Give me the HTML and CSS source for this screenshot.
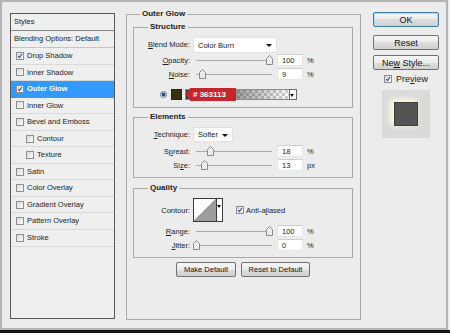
FILE: index.html
```html
<!DOCTYPE html>
<html lang="en">
<head>
    <meta charset="UTF-8">
    <meta name="viewport" content="width=device-width, initial-scale=1.0">
    <title>Layer Style - Outer Glow</title>
    <link rel="stylesheet" href="styles.css">
</head>
<body>

<div class="dialog">

    <div class="styles-list">
        <div class="list-head">Styles</div>
        <div class="list-item plain">Blending Options: Default</div>
        <div class="list-item"><span class="cb on"><svg viewBox="0 0 8 8"><path d="M1.6 4.2 L3.3 6.2 L6.6 1.4"/></svg></span>Drop Shadow</div>
        <div class="list-item"><span class="cb"></span>Inner Shadow</div>
        <div class="list-item selected"><span class="cb on"><svg viewBox="0 0 8 8"><path d="M1.6 4.2 L3.3 6.2 L6.6 1.4"/></svg></span>Outer Glow</div>
        <div class="list-item"><span class="cb"></span>Inner Glow</div>
        <div class="list-item"><span class="cb"></span>Bevel and Emboss</div>
        <div class="list-item nested"><span class="cb"></span>Contour</div>
        <div class="list-item nested"><span class="cb"></span>Texture</div>
        <div class="list-item"><span class="cb"></span>Satin</div>
        <div class="list-item"><span class="cb"></span>Color Overlay</div>
        <div class="list-item"><span class="cb"></span>Gradient Overlay</div>
        <div class="list-item"><span class="cb"></span>Pattern Overlay</div>
        <div class="list-item"><span class="cb"></span>Stroke</div>
    </div>

    <fieldset class="group main">
        <legend>Outer Glow</legend>

        <fieldset class="group subgroup structure">
            <legend>Structure</legend>
            <div class="row tall">
                <label class="lbl"><u>B</u>lend Mode:</label>
                <div class="select blend">Color Burn<span class="caret"></span></div>
            </div>
            <div class="row">
                <label class="lbl"><u>O</u>pacity:</label>
                <div class="slider"><span class="thumb" style="left:72.5px"><svg viewBox="0 0 7 10"><path d="M0.5 3.5 L3.5 0.5 L6.5 3.5 V9.5 H0.5 Z"/></svg></span></div>
                <div class="num">100</div><span class="unit">%</span>
            </div>
            <div class="row">
                <label class="lbl"><u>N</u>oise:</label>
                <div class="slider"><span class="thumb" style="left:5.5px"><svg viewBox="0 0 7 10"><path d="M0.5 3.5 L3.5 0.5 L6.5 3.5 V9.5 H0.5 Z"/></svg></span></div>
                <div class="num">9</div><span class="unit">%</span>
            </div>
            <div class="row color-row">
                <span class="radio"></span>
                <span class="swatch"></span>
                <div class="gradient"><span class="tag"># 363113</span></div>
                <span class="drop"><span class="caret small"></span></span>
            </div>
        </fieldset>

        <fieldset class="group subgroup elements">
            <legend>Elements</legend>
            <div class="row tech">
                <label class="lbl"><u>T</u>echnique:</label>
                <div class="select technique">Softer<span class="caret"></span></div>
            </div>
            <div class="row">
                <label class="lbl">S<u>p</u>read:</label>
                <div class="slider"><span class="thumb" style="left:13.5px"><svg viewBox="0 0 7 10"><path d="M0.5 3.5 L3.5 0.5 L6.5 3.5 V9.5 H0.5 Z"/></svg></span></div>
                <div class="num">18</div><span class="unit">%</span>
            </div>
            <div class="row">
                <label class="lbl">Si<u>z</u>e:</label>
                <div class="slider"><span class="thumb" style="left:7.5px"><svg viewBox="0 0 7 10"><path d="M0.5 3.5 L3.5 0.5 L6.5 3.5 V9.5 H0.5 Z"/></svg></span></div>
                <div class="num">13</div><span class="unit">px</span>
            </div>
        </fieldset>

        <fieldset class="group subgroup quality">
            <legend>Quality</legend>
            <div class="row contour-row">
                <label class="lbl">Contour:</label>
                <div class="contour"><span class="curve"></span><span class="drop"><span class="caret small"></span></span></div>
                <label class="check"><span class="cb on"><svg viewBox="0 0 8 8"><path d="M1.6 4.2 L3.3 6.2 L6.6 1.4"/></svg></span>Anti-a<u>l</u>iased</label>
            </div>
            <div class="row range">
                <label class="lbl"><u>R</u>ange:</label>
                <div class="slider"><span class="thumb" style="left:72.5px"><svg viewBox="0 0 7 10"><path d="M0.5 3.5 L3.5 0.5 L6.5 3.5 V9.5 H0.5 Z"/></svg></span></div>
                <div class="num">100</div><span class="unit">%</span>
            </div>
            <div class="row">
                <label class="lbl"><u>J</u>itter:</label>
                <div class="slider"><span class="thumb" style="left:0px"><svg viewBox="0 0 7 10"><path d="M0.5 3.5 L3.5 0.5 L6.5 3.5 V9.5 H0.5 Z"/></svg></span></div>
                <div class="num">0</div><span class="unit">%</span>
            </div>
        </fieldset>

        <div class="defaults">
            <button class="btn small">Make Default</button>
            <button class="btn small">Reset to Default</button>
        </div>
    </fieldset>

    <div class="side">
        <button class="btn default">OK</button>
        <button class="btn reset">Reset</button>
        <button class="btn newstyle">Ne<u>w</u> Style...</button>
        <label class="preview-check"><span class="cb on"><svg viewBox="0 0 8 8"><path d="M1.6 4.2 L3.3 6.2 L6.6 1.4"/></svg></span>Pre<u>v</u>iew</label>
        <div class="preview-box"><div class="preview-square"></div></div>
    </div>

</div>

</body>
</html>
```

FILE: styles.css
```css
body {
    margin: 0;
    width: 450px;
    height: 333px;
    font-family: "Liberation Sans", Arial, sans-serif;
    font-size: 7.5px;
    color: #222;
    background: linear-gradient(to bottom, #ececec 330px, #151515 330px);
}

.dialog {
    width: 448px;
    height: 330px;
    box-sizing: border-box;
    border: 2px solid #b4b4b4;
    background-color: #ececec;
    display: flex;
    align-items: flex-start;
}

/* styles list on the left */

.styles-list {
    width: 105px;
    height: 306px;
    box-sizing: border-box;
    margin: 11px 0 0 8px;
    border: 1px solid #585858;
    background-color: #efefef;
}

.list-head {
    height: 16px;
    line-height: 16px;
    padding-left: 3px;
    border-bottom: 1px solid #8a8a8a;
}

.list-item {
    height: 15.55px;
    line-height: 15.55px;
    border-bottom: 1px solid #d9d9d9;
    display: flex;
    align-items: center;
    padding-left: 5px;
    white-space: nowrap;
}

.list-item.plain {
    padding-left: 3px;
    height: 16px;
    border-bottom-color: #c4c4c4;
}

.list-item.nested {
    padding-left: 15px;
}

.list-item.selected {
    background-color: #3399ff;
    color: #fff;
    font-weight: bold;
    border-bottom-color: #3399ff;
}

.cb {
    width: 8px;
    height: 8px;
    box-sizing: border-box;
    border: 1px solid #8e8e8e;
    background: linear-gradient(135deg, #d8d8d8, #fdfdfd);
    margin-right: 3px;
    flex-shrink: 0;
    display: inline-flex;
}

.cb svg {
    width: 6px;
    height: 6px;
}

.cb path {
    fill: none;
    stroke: #2a4a9c;
    stroke-width: 1.4;
}

/* main group */

.group {
    margin: 0;
    border: 1px solid #a9a9a9;
    box-sizing: border-box;
    min-width: 0;
}

.group legend {
    font-weight: bold;
    font-size: 8px;
    line-height: 10px;
    padding: 0 2px;
}

.main {
    width: 235px;
    height: 311px;
    margin: 7px 0 0 11px;
    padding: 3px 7px 0 6px;
}

.main > legend {
    margin-left: 7px;
}

.subgroup {
    width: 220px;
    padding: 4px 0 6px 0;
}

.subgroup > legend {
    margin-left: 14px;
}

.elements {
    margin-top: 4px;
    padding: 5px 0 5px 0;
}

.quality {
    margin-top: 5px;
    padding: 5px 0 5px 0;
}

.row {
    display: flex;
    align-items: center;
    height: 14px;
}

.row.tall {
    height: 17px;
}

.row.tech {
    height: 15px;
    margin-bottom: 2px;
}

.lbl {
    width: 56px;
    margin-right: 3px;
    text-align: right;
    white-space: nowrap;
}

.select {
    position: relative;
    height: 16px;
    line-height: 16px;
    box-sizing: border-box;
    padding-left: 4px;
    background-color: #fff;
    border: 1px solid #e2e2e2;
}

.select.blend {
    width: 84px;
}

.select.technique {
    width: 40px;
    height: 15px;
    line-height: 14px;
}

.caret {
    position: absolute;
    right: 4px;
    top: 6px;
    border-left: 3px solid transparent;
    border-right: 3px solid transparent;
    border-top: 3px solid #111;
}

.caret.small {
    right: 2px;
    top: 4px;
    border-left-width: 2px;
    border-right-width: 2px;
}

.slider {
    position: relative;
    width: 79px;
    height: 14px;
    background: linear-gradient(#ababab, #ababab) no-repeat 3px 7px / 76px 1px;
}

.thumb {
    position: absolute;
    top: 2px;
    width: 7px;
    height: 10px;
}

.thumb svg {
    width: 7px;
    height: 10px;
    display: block;
}

.thumb path {
    fill: #ececec;
    stroke: #8a8a8a;
    stroke-width: 1;
}

.num {
    width: 26px;
    height: 12px;
    line-height: 12px;
    box-sizing: border-box;
    margin-left: 5px;
    padding-left: 4px;
    background-color: #fff;
    border: 1px solid #e6e6e6;
    border-top-color: #cfcfcf;
}

.unit {
    margin-left: 4px;
}

/* colour row */

.color-row {
    margin-top: 6px;
    padding-left: 26px;
}

.radio {
    width: 7px;
    height: 7px;
    box-sizing: border-box;
    border-radius: 50%;
    border: 1px solid #6c7c90;
    background: radial-gradient(circle, #1d4f8f 0 1.5px, #b9d5ee 2px);
}

.swatch {
    width: 11px;
    height: 11px;
    box-sizing: border-box;
    margin-left: 4px;
    background-color: #363113;
    border: 1px solid #222;
}

.gradient {
    position: relative;
    width: 104px;
    height: 11px;
    margin-left: 3px;
    box-sizing: border-box;
    border: 1px solid #8a8a8a;
    border-right: none;
    background:
        linear-gradient(to right, rgba(50, 50, 50, 0.95), rgba(90, 90, 90, 0)),
        conic-gradient(#cfcfcf 25%, #fff 0 50%, #cfcfcf 0 75%, #fff 0) 0 0 / 6px 6px;
}

.tag {
    position: absolute;
    left: 4px;
    top: -2px;
    width: 46px;
    height: 13px;
    line-height: 13px;
    padding-left: 3px;
    box-sizing: border-box;
    background-color: #c5252d;
    color: #fff;
    font-weight: bold;
    font-size: 8px;
}

.tag::before {
    content: "";
    position: absolute;
    left: -5px;
    top: 1px;
    border-top: 5.5px solid transparent;
    border-bottom: 5.5px solid transparent;
    border-right: 5px solid #c5252d;
}

.drop {
    position: relative;
    width: 8px;
    height: 11px;
    box-sizing: border-box;
    background-color: #fff;
    border: 1px solid #6e6e6e;
}

/* quality */

.contour-row {
    height: 24px;
}

.contour {
    display: flex;
    height: 24px;
}

.curve {
    width: 24px;
    height: 24px;
    box-sizing: border-box;
    border: 1px solid #3a3a3a;
    background: linear-gradient(to bottom right, #fff 50%, #9c9c9c 50%);
}

.contour .drop {
    width: 6px;
    height: 24px;
    border-left: none;
    border-color: #3a3a3a;
}

.contour .caret.small {
    right: 1px;
    top: 6px;
}

.check {
    display: flex;
    align-items: center;
    margin-left: 13px;
}

.check .cb {
    margin-right: 2px;
}

.row.range {
    margin-top: 2px;
}

/* buttons */

.btn {
    font-family: "Liberation Sans", Arial, sans-serif;
    color: #111;
    height: 15px;
    padding: 0;
    box-sizing: border-box;
    border: 1px solid #707070;
    border-radius: 2px;
    background: linear-gradient(#f7f7f7, #ebebeb 50%, #dddddd 50%, #d1d1d1);
}

.btn.small {
    font-size: 7.5px;
}

.defaults {
    display: flex;
    justify-content: center;
    gap: 5px;
    margin-top: 4px;
}

.defaults .btn:first-child {
    width: 60px;
}

.defaults .btn:last-child {
    width: 69px;
}

.side {
    display: flex;
    flex-direction: column;
    width: 66px;
    margin: 10px 0 0 12px;
}

.side .btn {
    width: 66px;
    font-size: 9px;
}

.btn.default {
    border-color: #3c7fb1;
    box-shadow: inset 0 0 0 1px #a8dcf6;
}

.btn.reset {
    margin-top: 8px;
}

.btn.newstyle {
    margin-top: 5px;
}

.preview-check {
    display: flex;
    align-items: center;
    height: 10px;
    margin: 4px 0 0 11px;
    font-size: 9px;
}

.preview-check .cb {
    margin-right: 4px;
}

.preview-box {
    width: 48px;
    height: 48px;
    margin: 6px 0 0 9px;
    background-color: #dadada;
    display: flex;
    align-items: center;
    justify-content: center;
}

.preview-square {
    width: 24px;
    height: 24px;
    box-sizing: border-box;
    background-color: #545454;
    border: 1px solid #3c3c3c;
    box-shadow: -3px -2px 6px 1px #fffbe0;
}
```
